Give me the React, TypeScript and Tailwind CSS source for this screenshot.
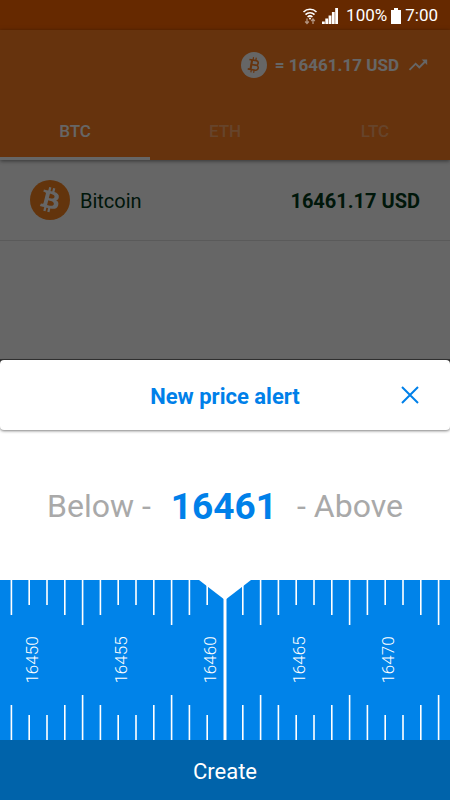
import { useState } from "react";
import { MdTrendingUp } from "react-icons/md";

const tabs = ["BTC", "ETH", "LTC"];

const STEP = 17.8;

function BitcoinLogo({ className }: { className: string }) {
  return (
    <svg viewBox="0 0 64 64" className={className} aria-hidden="true">
      <circle cx="32" cy="32" r="32" fill="currentColor" />
      <path
        fill="white"
        d="M46.1 27.4c.6-4.3-2.6-6.5-7-8.1l1.4-5.7-3.5-.9-1.4 5.6-2.8-.7 1.4-5.6-3.5-.9-1.4 5.7-2.2-.5-4.8-1.2-.9 3.7s2.6.6 2.5.6c1.4.4 1.7 1.3 1.6 2l-3.9 15.9c-.2.4-.6 1.1-1.6.8l-2.5-.6-1.8 4 4.6 1.1 2.5.7-1.5 5.8 3.5.9 1.4-5.8 2.8.7-1.4 5.7 3.5.9 1.4-5.8c6 1.1 10.5.7 12.4-4.7 1.5-4.4-.1-6.9-3.2-8.5 2.3-.5 4-2 4.4-5.1zm-8 11.2c-1.1 4.4-8.4 2-10.8 1.4l1.9-7.7c2.4.6 10 1.8 8.9 6.3zm1.1-11.3c-1 4-7.1 2-9.1 1.5l1.8-7c2 .5 8.3 1.4 7.3 5.5z"
      />
    </svg>
  );
}

// thin version for the header
function BitcoinOutline({ className }: { className: string }) {
  return (
    <svg viewBox="0 0 26 26" className={className} aria-hidden="true">
      <circle cx="13" cy="13" r="13" fill="currentColor" />
      <g transform="rotate(10 13 13)" fill="none" stroke="#ff8022">
        <path d="M7.500 8.300h7a2.300 2.300 0 0 1 0 4.600H10.300M14.500 12.900h.7a2.500 2.500 0 0 1 0 5H7.500" strokeWidth="1.600" />
        <path d="M10.300 8.300v9.600" strokeWidth="2.200" />
        <path d="M11.200 5.400v2.900M14 5.400v2.900M11.200 17.900v2.900M14 17.900v2.900" strokeWidth="1.200" />
      </g>
    </svg>
  );
}

function StatusBar() {
  return (
    <div className="flex h-[30px] items-center justify-end bg-[#662900] pt-0.5 pr-3 text-[17px] text-white">
      <svg viewBox="0 0 16 18" className="mr-1 h-[18px] w-4" fill="none" stroke="currentColor" aria-hidden="true">
        <path d="M1.5 5a9.2 9.2 0 0 1 13 0M3.5 7.6a6.4 6.4 0 0 1 9 0M5.6 10a3.5 3.5 0 0 1 4.8 0" strokeWidth="1.6" />
        <circle cx="8" cy="11.6" r="1" fill="currentColor" stroke="none" />
        <path d="M5 11.500v5M3.200 14.500 5 16.500l1.800-2M11 17v-5M9.200 14 11 12l1.800 2" strokeWidth="1.300" opacity="0.5" />
      </svg>
      <svg viewBox="0 0 16 16" className="mr-2 h-4 w-4" fill="currentColor" aria-hidden="true">
        <path d="M0 13.500h2.800V16H0zM3.300 10.500h2.800V16H3.300zM6.600 7.500h2.800V16H6.600zM9.900 4h2.800v12H9.900zM13.200 0H16v16h-2.800z" />
      </svg>
      <span>100%</span>
      <svg viewBox="0 0 10 16" className="mx-1 h-4 w-[10px]" fill="currentColor" aria-hidden="true">
        <path d="M3 0h4v2h3v14H0V2h3z" />
      </svg>
      <span>7:00</span>
    </div>
  );
}

function Ruler({ value, onChange }: { value: number; onChange: (v: number) => void }) {
  const ticks = Array.from({ length: 25 }, (_, i) => value - 12 + i);

  return (
    <div className="relative bg-[#0083e9]">
      <svg viewBox="0 0 450 160" className="block w-full" fill="white" aria-hidden="true">
        {ticks.map((n) => {
          const x = 225 + (n - value) * STEP;
          const k = n % 5;
          const len = k === 3 ? 45 : k === 2 || k === 4 ? 35 : 25;
          return (
            <g key={n}>
              <rect x={x - 0.8} y="0" width="1.6" height={len} />
              <rect x={x - 0.8} y={160 - len} width="1.6" height={len} />
              {k === 0 && (
                <text
                  transform={`translate(${x + 9} 80) rotate(-90)`}
                  textAnchor="middle"
                  className="text-[17px] font-light"
                >
                  {n}
                </text>
              )}
            </g>
          );
        })}
        <path d="M199 0h52l-26 20z" />
        <path d="M223.500 10h3v150h-3z" />
      </svg>
      <input
        type="range"
        aria-label="Price"
        min={16000}
        max={17000}
        value={value}
        onChange={(e) => onChange(Number(e.target.value))}
        className="absolute inset-0 h-full w-full cursor-pointer opacity-0"
      />
    </div>
  );
}

export default function App() {
  const [tab, setTab] = useState("BTC");
  const [price, setPrice] = useState(16461);

  return (
    <div className="flex min-h-screen flex-col bg-white font-['Roboto',sans-serif]">
      <StatusBar />

      <main className="relative flex-1 bg-white">
        <header className="bg-[#ff8022] shadow-[0_1px_4px_rgba(0,0,0,0.5)]">
          <div className="flex h-[70px] items-center justify-end gap-2 pr-[21px] text-[17px] font-bold text-white">
            <BitcoinOutline className="h-[26px] w-[26px]" />
            <span className="pt-0.5">= 16461.17 USD</span>
            <MdTrendingUp className="h-[22px] w-[22px]" />
          </div>
          <nav className="grid h-[60px] grid-cols-3">
            {tabs.map((t) => (
              <button
                key={t}
                onClick={() => setTab(t)}
                className={
                  t === tab
                    ? "border-b-3 border-white pt-1.5 text-[17px] font-medium text-white"
                    : "border-b-3 border-transparent pt-1.5 text-[17px] font-medium text-white/35"
                }
              >
                {t}
              </button>
            ))}
          </nav>
        </header>

        <div className="flex h-[81px] items-center border-b border-[#e0e0e0] px-[30px] text-xl text-[#003a1a]">
          <BitcoinLogo className="mr-[10px] h-10 w-10 text-[#f78320]" />
          <span className="pt-0.5">Bitcoin</span>
          <span className="ml-auto pt-0.5 font-bold">16461.17 USD</span>
        </div>

        <div className="absolute inset-0 bg-black/60" />
      </main>

      <section className="bg-[#333333]">
        <div className="mt-px rounded-t bg-white">
          <div className="relative flex h-[70px] items-center justify-center rounded shadow-[0_1px_3px_rgba(0,0,0,0.5)]">
            <h1 className="pt-0.5 text-[22px] font-bold text-[#0080e9]">New price alert</h1>
            <button aria-label="Close" className="absolute right-[30px] text-[#0080e9]">
              <svg viewBox="0 0 20 20" className="h-5 w-5" stroke="currentColor" strokeWidth="2" aria-hidden="true">
                <path d="M2 2l16 16M18 2 2 18" />
              </svg>
            </button>
          </div>

          <div className="flex h-[150px] items-center justify-center gap-5 pt-0.5 text-[32px] text-[#a9a9a9]">
            <span>Below -</span>
            <output className="pt-0.5 text-[37px] font-bold text-[#0080e9]">{price}</output>
            <span>- Above</span>
          </div>
        </div>

        <Ruler value={price} onChange={setPrice} />

        <button className="h-[60px] w-full bg-[#0063aa] pt-0.5 text-[22px] text-white">Create</button>
      </section>
    </div>
  );
}
